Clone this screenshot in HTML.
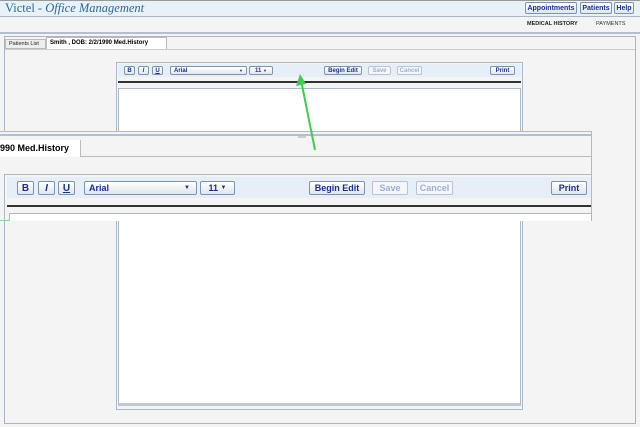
<!DOCTYPE html><html><head><style>
*{margin:0;padding:0;box-sizing:border-box}
body{width:640px;height:427px;background:#f4f4f4;position:relative;overflow:hidden;font-family:"Liberation Sans",Arial,sans-serif}
.a{position:absolute}
.btn{position:absolute;border:1px solid #7f93ad;border-radius:2px;background:linear-gradient(#fff,#dfe6ee);color:#1a2f8f;font-weight:bold;display:flex;align-items:center;justify-content:center;white-space:nowrap}
.dis{color:#9fb0d0;border-color:#b8c4d3;background:#f4f6f9}
</style></head><body>
<div class="a" style="left:0;top:0;width:640px;height:17px;background:#e8f0f8;border-bottom:1px solid #a9b8c8;border-top:1px solid #999"></div>
<div class="a" style="left:5px;top:1px;font-family:'Liberation Serif',serif;font-size:12.5px;color:#2c6a97">Victel - <i>Office Management</i></div>
<div class="btn" style="left:525px;top:2px;width:52px;height:12px;font-size:7px">Appointments</div>
<div class="btn" style="left:580px;top:2px;width:32px;height:12px;font-size:7px">Patients</div>
<div class="btn" style="left:614px;top:2px;width:20px;height:12px;font-size:7px">Help</div>
<div class="a" style="left:0;top:17px;width:640px;height:17px;border-bottom:2px solid #b3c0cc"></div>
<div class="a" style="left:527px;top:21px;font-size:5.5px;font-weight:bold;color:#222">MEDICAL HISTORY</div>
<div class="a" style="left:596px;top:21px;font-size:5.5px;color:#333">PAYMENTS</div>
<div class="a" style="left:4px;top:36px;width:632px;height:388px;border:1px solid #a9b5c2;background:#f4f4f4"></div>
<div class="a" style="left:5px;top:39px;width:41px;height:10px;border:1px solid #bbb;background:#eee;font-size:5.5px;line-height:8px;padding-left:3px;color:#222">Patients List</div>
<div class="a" style="left:46px;top:37px;width:121px;height:12px;background:#fff;border:1px solid #bbb;border-bottom:none;font-size:6px;font-weight:bold;line-height:10px;padding-left:3px">Smith , DOB: 2/2/1990 Med.History</div>
<div class="a" style="left:5px;top:49px;width:630px;height:1px;background:#ccc"></div>
<div class="a" style="left:116px;top:62px;width:407px;height:348px;border:1px solid #aeb9c6;background:#f4f4f4"></div>
<div class="a" style="left:118px;top:64px;width:403px;height:13px;background:#e6eef7"></div>
<div class="btn" style="left:124px;top:66px;width:11px;height:9px;font-size:6px">B</div>
<div class="btn" style="left:138px;top:66px;width:11px;height:9px;font-size:6px"><i>I</i></div>
<div class="btn" style="left:152px;top:66px;width:11px;height:9px;font-size:6px"><u>U</u></div>
<div class="btn" style="left:170px;top:66px;width:77px;height:9px;font-size:6px;justify-content:space-between;padding:0 3px">Arial<span style="font-size:4px">▼</span></div>
<div class="btn" style="left:249px;top:66px;width:24px;height:9px;font-size:6px">11&nbsp;<span style="font-size:4px">▼</span></div>
<div class="btn" style="left:324px;top:66px;width:38px;height:9px;font-size:6px">Begin Edit</div>
<div class="btn dis" style="left:368px;top:66px;width:23px;height:9px;font-size:6px">Save</div>
<div class="btn dis" style="left:397px;top:66px;width:25px;height:9px;font-size:6px">Cancel</div>
<div class="btn" style="left:490px;top:66px;width:25px;height:9px;font-size:6px">Print</div>
<div class="a" style="left:118px;top:81px;width:403px;height:2px;background:#333"></div>
<div class="a" style="left:118px;top:88px;width:403px;height:318px;background:#fff;border:1px solid #aeb9c6;border-bottom:3px solid #bfc9d3"></div>
<!-- overlay -->
<div class="a" style="left:0;top:131px;width:592px;height:90px;background:#f4f4f4;border:1px solid #7fe07f;border-left:none"></div>
<div class="a" style="left:0;top:134px;width:591px;height:5px;border-top:2px solid #b3c0cc"></div>
<div class="a" style="left:298px;top:136px;width:8px;height:2px;background:#ccc"></div>
<div class="a" style="left:0;top:140px;width:80px;height:17px;background:#fff;font-size:9px;font-weight:bold;line-height:17px">990 Med.History</div>
<div class="a" style="left:80px;top:140px;width:1px;height:17px;background:#bbb"></div>
<div class="a" style="left:80px;top:156px;width:511px;height:1px;background:#bbb"></div>
<div class="a" style="left:4px;top:174px;width:587px;height:47px;border:1px solid #aeb9c6;border-right:none;border-bottom:none"></div>
<div class="a" style="left:7px;top:177px;width:584px;height:21px;background:#e6eef7"></div>
<div class="btn" style="left:17px;top:181px;width:17px;height:14px;font-size:10px">B</div>
<div class="btn" style="left:38px;top:181px;width:17px;height:14px;font-size:10px"><i>I</i></div>
<div class="btn" style="left:58px;top:181px;width:17px;height:14px;font-size:10px"><u>U</u></div>
<div class="btn" style="left:84px;top:181px;width:113px;height:14px;font-size:9px;justify-content:space-between;padding:0 6px 0 4px">Arial<span style="font-size:6px">▼</span></div>
<div class="btn" style="left:200px;top:181px;width:35px;height:14px;font-size:9px">11&nbsp;<span style="font-size:6px">▼</span></div>
<div class="btn" style="left:309px;top:181px;width:56px;height:14px;font-size:9px">Begin Edit</div>
<div class="btn dis" style="left:372px;top:181px;width:36px;height:14px;font-size:9px">Save</div>
<div class="btn dis" style="left:416px;top:181px;width:37px;height:14px;font-size:9px">Cancel</div>
<div class="btn" style="left:551px;top:181px;width:36px;height:14px;font-size:9px">Print</div>
<div class="a" style="left:7px;top:205px;width:584px;height:2px;background:#333"></div>
<div class="a" style="left:9px;top:213px;width:582px;height:8px;background:#fff;border:1px solid #aeb9c6;border-bottom:none;border-right:none"></div>
<svg class="a" style="left:0;top:0" width="640" height="427"><line x1="315" y1="150" x2="301" y2="80" stroke="#3ccf4e" stroke-width="2"/><polygon points="300,74 296,86 306,84" fill="#3ccf4e"/></svg>
</body></html>
